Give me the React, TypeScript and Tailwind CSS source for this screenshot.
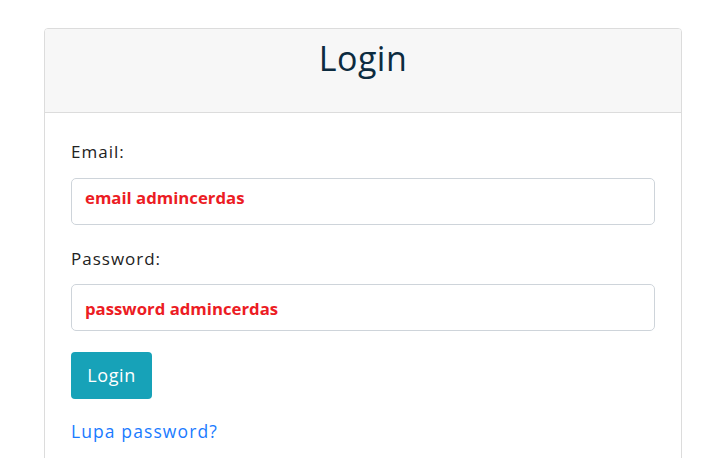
export default function App() {
  const f = { fontFamily: '"Open Sans", "Lato", sans-serif' };
  const red = { fontFamily: '"Open Sans", "Liberation Sans", sans-serif' };
  return (
    <div className="min-h-[458px] w-[725px] bg-white pt-[28px] pl-[44px]" style={f}>
      <div className="w-[638px] h-[440px] border border-[#dcdcdc] rounded-[4px] overflow-hidden">
        <div className="h-[84px] bg-[#f7f7f7] border-b border-[#dcdcdc] flex justify-center pt-[5px]">
          <h1 className="text-[34px] leading-[48px] text-[#0c2b3f] tracking-[0.5px]">Login</h1>
        </div>
        <div className="px-[26px] pt-[27px] tracking-[1px]">
          <div className="text-[17px] leading-[24px] text-[#222]">Email:</div>
          <div className="mt-[14px] h-[47px] border border-[#ced4da] rounded-[5px] pl-[13px] pt-[6px] tracking-normal">
            <span className="text-[16.75px] font-bold text-[#ec1c24]" style={red}>email admincerdas</span>
          </div>
          <div className="mt-[22px] text-[17px] leading-[24px] text-[#222]">Password:</div>
          <div className="mt-[13px] h-[47px] border border-[#ced4da] rounded-[5px] pl-[13px] pt-[11px] tracking-normal">
            <span className="text-[16.75px] font-bold text-[#ec1c24]" style={red}>password admincerdas</span>
          </div>
          <button className="mt-[21px] w-[81px] h-[47px] bg-[#17a2b8] rounded-[4px] text-white text-[18px] flex items-center justify-center tracking-[0.6px]">
            Login
          </button>
          <div className="mt-[20px] text-[17.5px] leading-[24px] text-[#1a7bff] tracking-[1.1px]">Lupa password?</div>
        </div>
      </div>
    </div>
  );
}
